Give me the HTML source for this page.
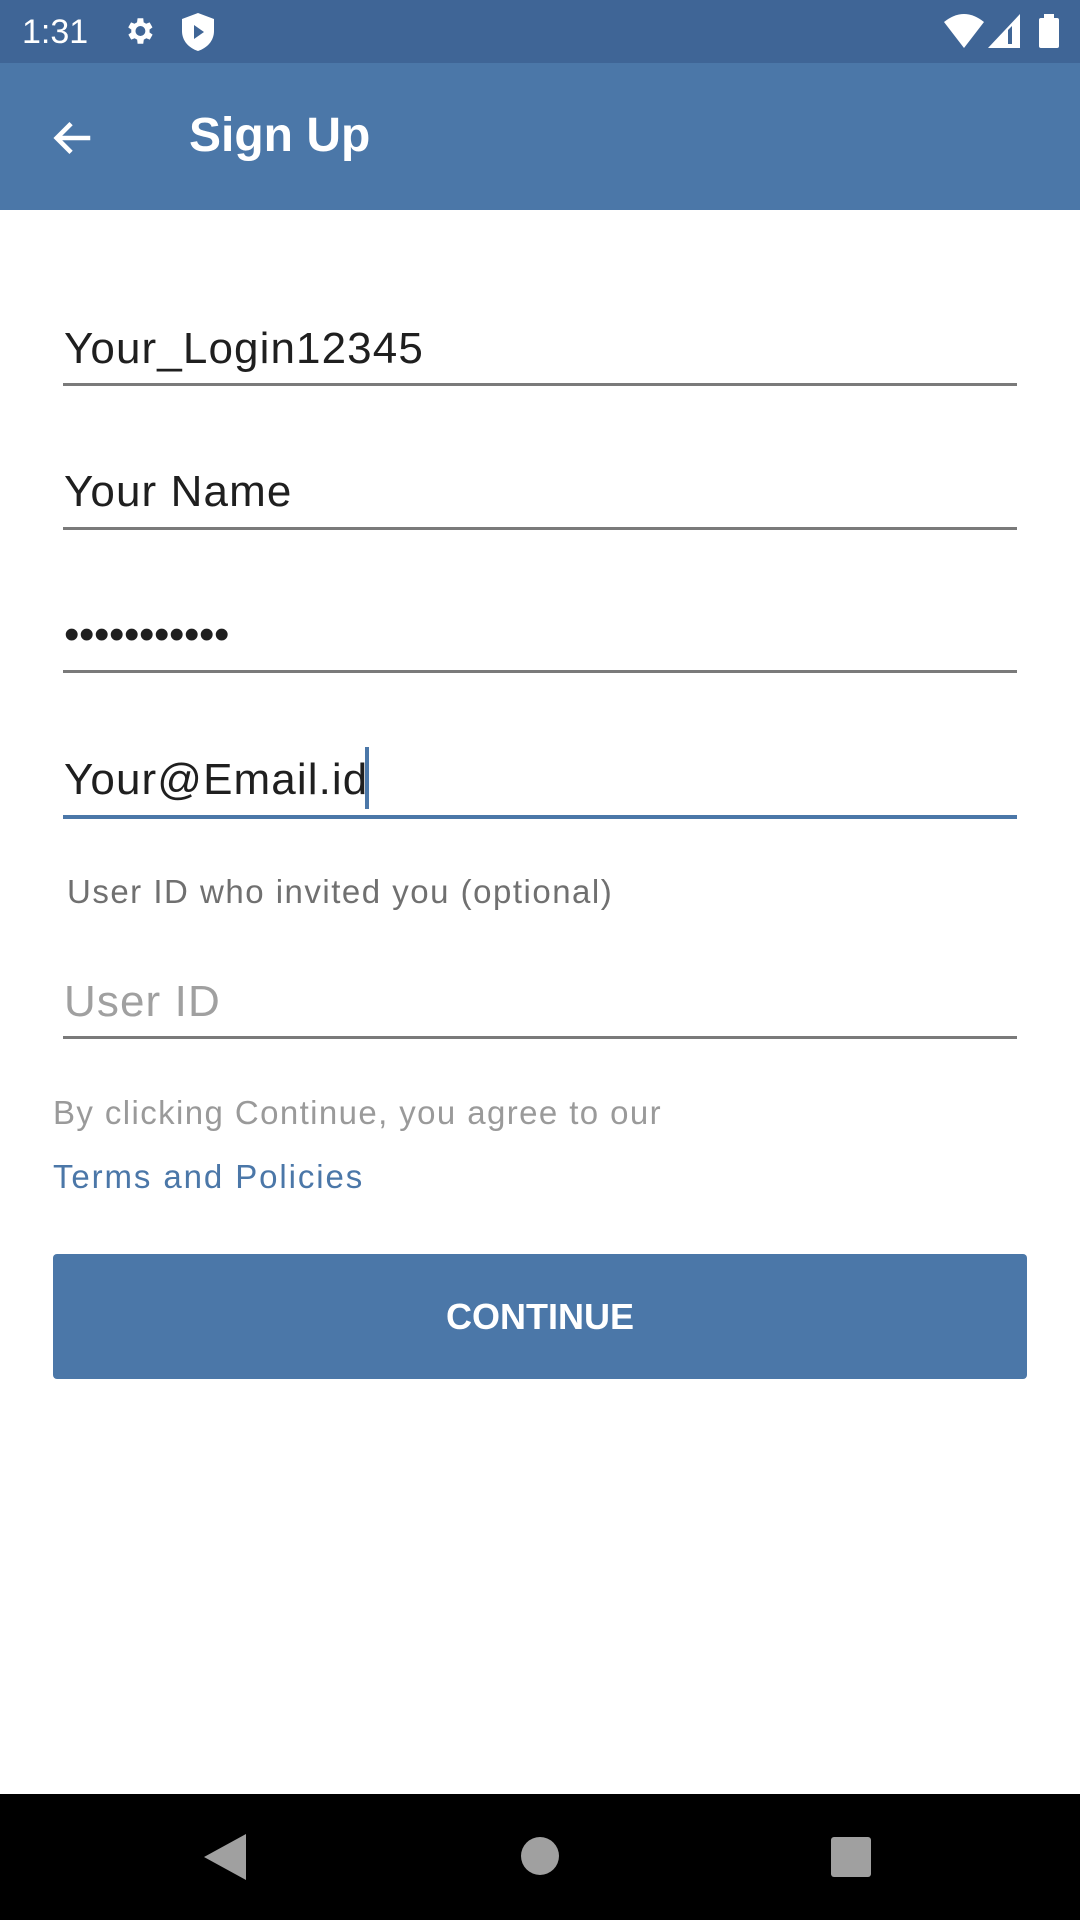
<!DOCTYPE html>
<html><head><meta charset="utf-8"><style>
*{margin:0;padding:0;box-sizing:border-box}
body{width:1080px;height:1920px;position:relative;background:#fff;font-family:"Liberation Sans",Roboto,sans-serif;overflow:hidden}
.a{position:absolute;white-space:nowrap}
.t{position:absolute;left:64px;font-size:44px;color:#1f1f1f;line-height:60px;letter-spacing:1.1px}
.l{position:absolute;left:63px;width:954px;height:3px;background:#7a7a7a}
</style></head><body>
<div class="a" style="left:0;top:0;width:1080px;height:63px;background:#3f6596"></div>
<div class="a" style="left:22px;top:12px;color:#fff;font-size:34px;line-height:40px">1:31</div>
<svg class="a" style="left:122px;top:14px" width="34" height="34" viewBox="0 0 24 24"><path fill="#fff" d="M19.4 13a7.5 7.5 0 000-2l2.1-1.6-2-3.5-2.5 1a7 7 0 00-1.7-1L15 3h-4l-.4 2.9a7 7 0 00-1.7 1l-2.5-1-2 3.5L6.6 11a7.5 7.5 0 000 2l-2.1 1.6 2 3.5 2.5-1a7 7 0 001.7 1L11 21h4l.4-2.9a7 7 0 001.7-1l2.5 1 2-3.5zM13 15.5a3.5 3.5 0 110-7 3.5 3.5 0 010 7z"/></svg>
<svg class="a" style="left:182px;top:13px" width="32" height="38" viewBox="0 0 16 19"><path fill="#fff" d="M8 0L0 3v6c0 5 3.5 8.5 8 10 4.5-1.5 8-5 8-10V3zM6 6l5 3.5L6 13z"/></svg>
<svg class="a" style="left:944px;top:14px" width="40" height="34" viewBox="0 0 20 17"><path fill="#fff" d="M0 4Q10-4 20 4L10 17z"/></svg>
<svg class="a" style="left:988px;top:14px" width="32" height="34" viewBox="0 0 16 17"><path fill="#fff" d="M16 0V17H0z"/><path fill="#3f6596" d="M12 6V15H10V8z"/></svg>
<div class="a" style="left:1039px;top:18px;width:20px;height:30px;background:#fff;border-radius:2px"></div>
<div class="a" style="left:1044px;top:14px;width:10px;height:5px;background:#fff"></div>
<div class="a" style="left:0;top:63px;width:1080px;height:147px;background:#4b77a8"></div>
<svg class="a" style="left:50px;top:115px" width="46" height="46" viewBox="0 0 24 24"><path fill="none" stroke="#fff" stroke-width="2.4" d="M21 12H4M11 4.5L3.5 12l7.5 7.5"/></svg>
<div class="a" style="left:189px;top:106px;color:#fff;font-size:48px;font-weight:bold;line-height:60px">Sign Up</div>

<div class="t" style="top:319px">Your_Login12345</div><div class="l" style="top:383px"></div>
<div class="t" style="top:462px">Your Name</div><div class="l" style="top:527px"></div>
<div class="t" style="top:605px;font-size:44px;letter-spacing:-0.4px">•••••••••••</div><div class="l" style="top:670px"></div>
<div class="t" style="top:750px">Your@Email.id</div>
<div class="a" style="left:365px;top:747px;width:4px;height:62px;background:#4b77a8"></div>
<div class="l" style="top:815px;height:4px;background:#4b77a8"></div>
<div class="a" style="left:67px;top:872px;font-size:33px;color:#707070;line-height:40px;letter-spacing:1.5px">User ID who invited you (optional)</div>
<div class="t" style="top:972px;color:#a0a0a0">User ID</div><div class="l" style="top:1036px"></div>
<div class="a" style="left:53px;top:1093px;font-size:33px;color:#9a9a9a;line-height:40px;letter-spacing:1.4px">By clicking Continue, you agree to our</div>
<div class="a" style="left:53px;top:1157px;font-size:33px;color:#4b77a8;line-height:40px;letter-spacing:1.9px">Terms and Policies</div>
<div class="a" style="left:53px;top:1254px;width:974px;height:125px;background:#4b77a8;border-radius:4px;color:#fff;font-size:36px;font-weight:bold;text-align:center;line-height:125px">CONTINUE</div>

<div class="a" style="left:0;top:1794px;width:1080px;height:126px;background:#000"></div>
<svg class="a" style="left:204px;top:1834px" width="42" height="46" viewBox="0 0 21 23"><path fill="#a0a0a0" d="M21 0V23L0 11.5z"/></svg>
<div class="a" style="left:521px;top:1837px;width:38px;height:38px;border-radius:50%;background:#a0a0a0"></div>
<div class="a" style="left:831px;top:1837px;width:40px;height:40px;border-radius:3px;background:#a0a0a0"></div>
</body></html>
